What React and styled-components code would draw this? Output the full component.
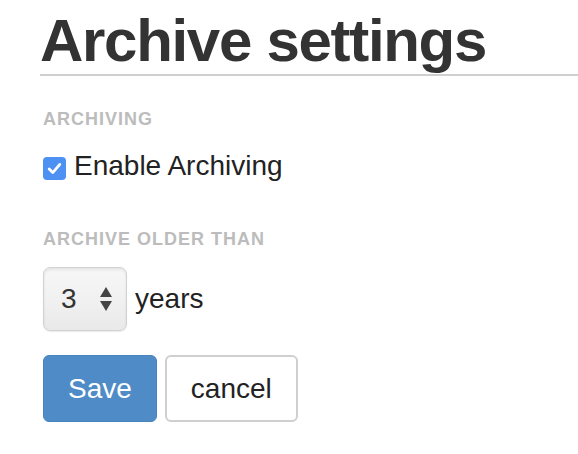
import styled, { createGlobalStyle } from "styled-components";

const Global = createGlobalStyle`
  html, body {
    margin: 0;
    padding: 0;
    background: #fff;
  }
  body {
    font-family: "Liberation Sans", Arial, Helvetica, sans-serif;
    color: #333;
  }
`;

const Page = styled.div`
  padding: 8px 0 0 40px;
`;

const Title = styled.h1`
  margin: 0;
  font-size: 60px;
  font-weight: 700;
  line-height: 66px;
  letter-spacing: -1.3px;
  color: #333;
  border-bottom: 2px solid #cfcfcf;
`;

const Body = styled.div`
  padding-left: 3px;
`;

const Label = styled.div`
  margin-top: ${(p) => p.$top}px;
  font-size: 18px;
  line-height: 20px;
  font-weight: 700;
  letter-spacing: 1px;
  color: #bcbcbc;
  text-transform: uppercase;
`;

const CheckRow = styled.label`
  display: flex;
  align-items: flex-start;
  gap: 8px;
  margin-top: 21px;
  font-size: 28px;
  line-height: 32px;
  color: #222;
`;

const Box = styled.span`
  display: flex;
  align-items: center;
  justify-content: center;
  width: 23px;
  height: 23px;
  margin-top: 7px;
  border-radius: 4px;
  background: #4d92f2;
`;

const Row = styled.div`
  display: flex;
  align-items: center;
  gap: 8px;
  margin-top: ${(p) => p.$top}px;
`;

const Stepper = styled.div`
  display: flex;
  align-items: center;
  justify-content: space-between;
  box-sizing: border-box;
  width: 84px;
  height: 64px;
  padding: 0 14px 0 17px;
  border: 1px solid #d2d2d2;
  border-radius: 7px;
  background: linear-gradient(#f7f7f7, #f1f1f1 50%, #e9e9e9);
  box-shadow: inset 0 2px 3px rgba(0, 0, 0, 0.08), 0 1px 1px rgba(0, 0, 0, 0.08);
  font-size: 28px;
  color: #333;
`;

const Unit = styled.span`
  font-size: 28px;
  color: #222;
`;

const Button = styled.button`
  box-sizing: border-box;
  height: 67px;
  padding: 0 24px;
  border-radius: 6px;
  font-family: inherit;
  font-size: 28px;
  border: ${(p) => (p.$primary ? "1px solid #4a84bd" : "2px solid #cfcfcf")};
  background: ${(p) => (p.$primary ? "#4f8bc6" : "#fff")};
  color: ${(p) => (p.$primary ? "#fff" : "#222")};
  cursor: pointer;
`;

const Check = () => (
  <svg width="15" height="13" viewBox="0 0 15 13">
    <path
      d="M2.2 7 L5.8 10.6 L12.8 2.4"
      fill="none"
      stroke="#fff"
      strokeWidth="2.8"
      strokeLinecap="round"
      strokeLinejoin="round"
    />
  </svg>
);

const Arrows = () => (
  <svg width="12" height="24" viewBox="0 0 12 24">
    <path d="M6 0 L12 10 L0 10 Z" fill="#444" />
    <path d="M0 14 L12 14 L6 24 Z" fill="#444" />
  </svg>
);

export default function App() {
  return (
    <Page>
      <Global />
      <Title>Archive settings</Title>
      <Body>
        <Label $top={33}>Archiving</Label>
        <CheckRow>
          <Box>
            <Check />
          </Box>
          Enable Archiving
        </CheckRow>
        <Label $top={47}>Archive older than</Label>
        <Row $top={18}>
          <Stepper>
            <span>3</span>
            <Arrows />
          </Stepper>
          <Unit>years</Unit>
        </Row>
        <Row $top={24}>
          <Button $primary>Save</Button>
          <Button>cancel</Button>
        </Row>
      </Body>
    </Page>
  );
}
